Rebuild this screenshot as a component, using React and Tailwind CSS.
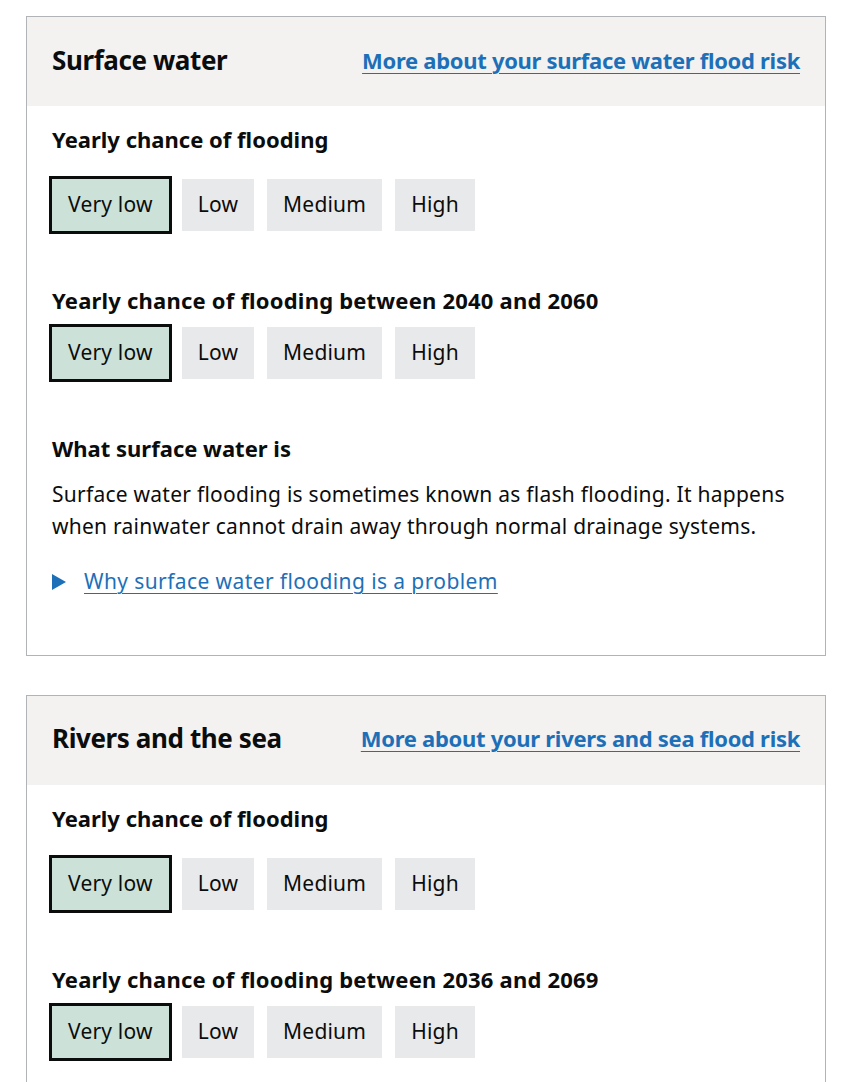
const levels = ['Very low', 'Low', 'Medium', 'High'];

function RiskScale({ selected }) {
  return (
    <div className="flex items-center">
      {levels.map((level) => (
        <div
          key={level}
          className={
            level === selected
              ? 'mr-[13px] h-[52px] px-[16px] flex items-center bg-[#cce2d8] outline-[3px] outline-solid outline-[#0b0c0c] text-[21px] tracking-[0.2px] text-[#0b0c0c]'
              : 'mr-[13px] h-[52px] px-[16px] flex items-center bg-[#e8e9ea] text-[21px] tracking-[0.2px] text-[#0b0c0c]'
          }
        >
          {level}
        </div>
      ))}
    </div>
  );
}

function FloodCard({ title, linkText, future, children }) {
  return (
    <section className="border border-[#b1b4b6] bg-white">
      <div className="h-[89px] bg-[#f3f2f1] px-[25px] pb-[3px] flex items-center justify-between">
        <h2 className="text-[26px] font-bold text-[#0b0c0c] tracking-[-0.4px]">{title}</h2>
        <a href="#" className="text-[22px] font-bold text-[#1d70b8] underline underline-offset-[4px] decoration-1 tracking-[-0.3px]">
          {linkText}
        </a>
      </div>
      <div className="px-[25px] pt-[20px] pb-[57px]">
        <h3 className="text-[22px] font-bold text-[#0b0c0c] leading-[26px] mb-[27px]">Yearly chance of flooding</h3>
        <RiskScale selected="Very low" />
        <h3 className="text-[22px] font-bold text-[#0b0c0c] leading-[26px] mt-[56px] mb-[14px] tracking-[0.2px]">
          Yearly chance of flooding between {future}
        </h3>
        <RiskScale selected="Very low" />
        {children}
      </div>
    </section>
  );
}

export default function App() {
  return (
    <div className="min-h-screen bg-white pl-[26px] pr-[24px] pt-[16px] pb-10" style={{ fontFamily: '"Noto Sans", Arial, sans-serif' }}>
      <FloodCard
        title="Surface water"
        linkText="More about your surface water flood risk"
        future="2040 and 2060"
      >
        <h3 className="text-[22px] font-bold text-[#0b0c0c] leading-[26px] mt-[56px] mb-[17px]">What surface water is</h3>
        <p className="text-[21px] leading-[32px] text-[#0b0c0c] tracking-[0.25px]">
          Surface water flooding is sometimes known as flash flooding. It happens when rainwater cannot drain away through normal drainage systems.
        </p>
        <div className="mt-[24px] flex items-center">
          <svg width="14" height="16" viewBox="0 0 14 16" className="mr-[18px]">
            <path d="M0 0 L14 8 L0 16 Z" fill="#1d70b8" />
          </svg>
          <a href="#" className="text-[21px] text-[#1d70b8] underline underline-offset-[4px] decoration-1 tracking-[0.4px]">
            Why surface water flooding is a problem
          </a>
        </div>
      </FloodCard>
      <div className="h-[39px]" />
      <FloodCard
        title="Rivers and the sea"
        linkText="More about your rivers and sea flood risk"
        future="2036 and 2069"
      />
    </div>
  );
}
